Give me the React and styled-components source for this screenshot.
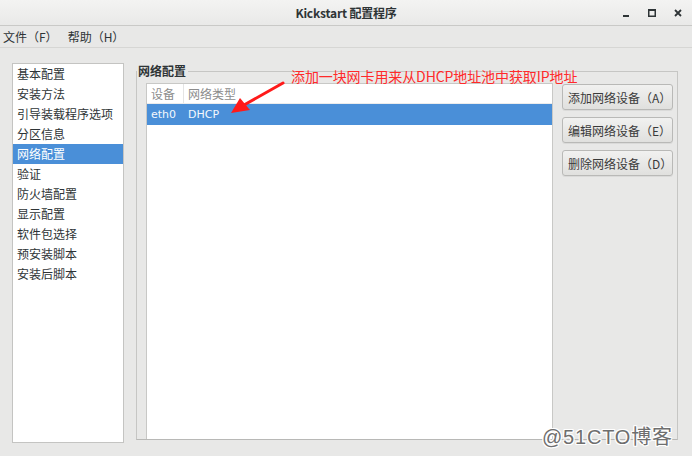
import React from "react";
import styled, { createGlobalStyle } from "styled-components";

const GlobalStyle = createGlobalStyle`
  html, body {
    margin: 0;
    padding: 0;
    background: #e8e8e7;
  }
  body {
    font-family: "Noto Sans CJK SC", "DejaVu Sans", sans-serif;
    font-size: 12px;
    color: #2e3436;
  }
`;

const Window = styled.div`
  width: 692px;
  height: 456px;
  position: relative;
  overflow: hidden;
  background: #e8e8e7;
`;

const TitleBar = styled.div`
  height: 25px;
  display: grid;
  grid-template-columns: 1fr auto 1fr;
  align-items: center;
  background: linear-gradient(#f3f3f2, #e9e9e8);
  border-bottom: 1px solid #c9c9c7;
`;

const Title = styled.div`
  grid-column: 2;
  font-weight: bold;
  font-size: 12px;
  color: #2e3436;
  letter-spacing: -0.2px;
`;

const Controls = styled.div`
  justify-self: end;
  display: flex;
  align-items: center;
  gap: 14px;
  padding-right: 8px;
`;

const ControlBtn = styled.span`
  width: 12px;
  height: 12px;
  display: flex;
  align-items: center;
  justify-content: center;
`;

const MenuBar = styled.div`
  height: 21px;
  display: flex;
  align-items: center;
  padding-left: 3px;
  gap: 10px;
  border-bottom: 1px solid #d6d6d4;
  background: #e8e8e7;
`;

const MenuItem = styled.span`
  font-size: 12px;
  color: #2e3436;
`;

const Body = styled.div`
  display: flex;
  padding: 15px 0 0 12px;
  gap: 12px;
`;

const Sidebar = styled.ul`
  list-style: none;
  margin: 0;
  padding: 0;
  width: 110px;
  height: 378px;
  background: #fff;
  border: 1px solid #c4c4c2;
`;

const SideItem = styled.li`
  height: 20px;
  line-height: 20px;
  padding-left: 4px;
  font-size: 12px;
  color: ${(p) => (p.$active ? "#fff" : "#2e3436")};
  background: ${(p) => (p.$active ? "#4a8fd8" : "transparent")};
`;

const Frame = styled.fieldset`
  margin: 1px 0 0 0;
  padding: 0 1px 0 9px;
  width: 530px;
  height: 374px;
  border: 1px solid #c6c6c4;
  border-bottom-color: #b8b8b6;
  display: flex;
  gap: 9px;
  min-width: 0;
`;

const Legend = styled.legend`
  padding: 0 2px 0 1px;
  margin-left: -9px;
  font-weight: bold;
  font-size: 12px;
  color: #2e3436;
  line-height: 14px;
`;

const Table = styled.div`
  margin-top: 5px;
  width: 405px;
  background: #fff;
  border: 1px solid #c8c8c6;
  border-bottom: none;
  display: flex;
  flex-direction: column;
`;

const HeadRow = styled.div`
  display: grid;
  grid-template-columns: 36px 1fr;
  height: 19px;
  border-bottom: 1px solid #ececec;
`;

const HeadCell = styled.div`
  padding-left: 4px;
  line-height: 19px;
  color: #8c8c8c;
  font-size: 12px;
  border-left: ${(p) => (p.$divider ? "1px solid #e4e4e4" : "none")};
`;

const Row = styled.div`
  display: grid;
  grid-template-columns: 36px 1fr;
  height: 21px;
  background: ${(p) => (p.$selected ? "#4a8fd8" : "#fff")};
  color: ${(p) => (p.$selected ? "#f4f8fd" : "#2e3436")};
`;

const Cell = styled.div`
  padding-left: ${(p) => (p.$second ? "5px" : "4px")};
  line-height: 21px;
  font-family: "DejaVu Sans", "Noto Sans CJK SC", sans-serif;
  font-size: 11px;
`;

const Buttons = styled.div`
  margin-top: 6px;
  display: flex;
  flex-direction: column;
  gap: 7px;
`;

const Button = styled.button`
  width: 111px;
  height: 26px;
  padding: 0 0 0 5px;
  text-align: left;
  border: 1px solid #b9b9b7;
  border-radius: 3px;
  background: linear-gradient(#f1f1f0, #e0e0de);
  box-shadow: 0 1px 0 rgba(0, 0, 0, 0.06);
  font-family: "Noto Sans CJK SC", sans-serif;
  font-size: 12px;
  color: #3a3a3a;
`;

const Note = styled.div`
  position: absolute;
  left: 291px;
  top: 66px;
  font-size: 14px;
  color: #ff2a2a;
  white-space: nowrap;
  letter-spacing: -0.1px;
`;

const Arrow = styled.svg`
  position: absolute;
  left: 226px;
  top: 80px;
`;

const Watermark = styled.div`
  position: absolute;
  left: 542px;
  top: 425px;
  font-family: "Liberation Sans", "Noto Sans CJK SC", sans-serif;
  font-size: 20px;
  line-height: 24px;
  color: #6e6e6e;
  text-shadow: 1px 0 #fff, -1px 0 #fff, 0 1px #fff, 0 -1px #fff,
    1px 1px #fff, -1px -1px #fff, 1px -1px #fff, -1px 1px #fff;
  letter-spacing: 0.8px;
  white-space: nowrap;
`;

const sections = [
  "基本配置",
  "安装方法",
  "引导装载程序选项",
  "分区信息",
  "网络配置",
  "验证",
  "防火墙配置",
  "显示配置",
  "软件包选择",
  "预安装脚本",
  "安装后脚本",
];

const App = () => {
  return (
    <Window>
      <GlobalStyle />
      <TitleBar>
        <Title>Kickstart 配置程序</Title>
        <Controls>
          <ControlBtn>
            <svg width="10" height="10" viewBox="0 0 10 10">
              <rect x="2" y="7" width="6" height="2" fill="#2e3436" />
            </svg>
          </ControlBtn>
          <ControlBtn>
            <svg width="10" height="10" viewBox="0 0 10 10">
              <rect x="1.75" y="1.75" width="6.5" height="6.5" fill="none" stroke="#2e3436" strokeWidth="1.5" />
              <rect x="1" y="1" width="8" height="2" fill="#2e3436" />
            </svg>
          </ControlBtn>
          <ControlBtn>
            <svg width="10" height="10" viewBox="0 0 10 10">
              <path d="M2 2 L8 8 M8 2 L2 8" stroke="#2e3436" strokeWidth="1.8" />
            </svg>
          </ControlBtn>
        </Controls>
      </TitleBar>
      <MenuBar>
        <MenuItem>文件（F）</MenuItem>
        <MenuItem>帮助（H）</MenuItem>
      </MenuBar>
      <Body>
        <Sidebar>
          {sections.map((s) => (
            <SideItem key={s} $active={s === "网络配置"}>
              {s}
            </SideItem>
          ))}
        </Sidebar>
        <Frame>
          <Legend>网络配置</Legend>
          <Table>
            <HeadRow>
              <HeadCell>设备</HeadCell>
              <HeadCell $divider>网络类型</HeadCell>
            </HeadRow>
            <Row $selected>
              <Cell>eth0</Cell>
              <Cell $second>DHCP</Cell>
            </Row>
          </Table>
          <Buttons>
            <Button>添加网络设备（A）</Button>
            <Button>编辑网络设备（E）</Button>
            <Button>删除网络设备（D）</Button>
          </Buttons>
        </Frame>
      </Body>
      <Note>添加一块网卡用来从DHCP地址池中获取IP地址</Note>
      <Arrow width="62" height="40" viewBox="0 0 62 40">
        <path d="M57 3 L18 25" stroke="#ff1a1a" strokeWidth="3" strokeLinecap="round" />
        <path d="M5 33 L14 18 L24 30 Z" fill="#ff1a1a" />
      </Arrow>
      <Watermark>@51CTO博客</Watermark>
    </Window>
  );
};

export default App;
